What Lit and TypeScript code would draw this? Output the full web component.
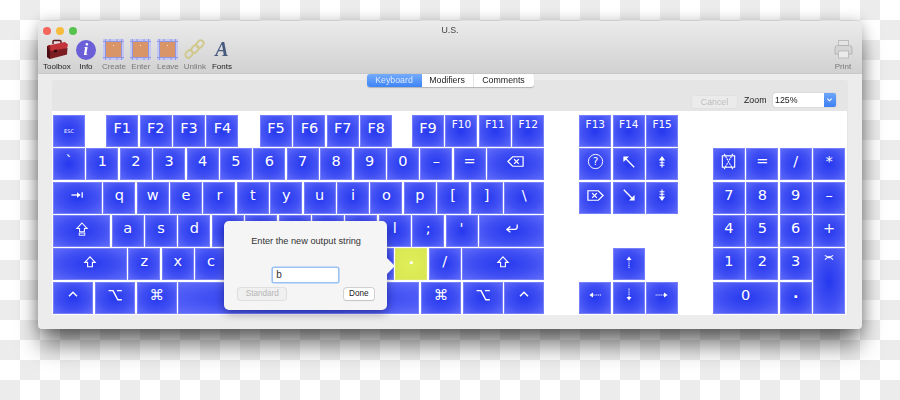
import { LitElement, html, css } from "lit";
import { customElement } from "lit/decorators.js";

const I: Record<string, unknown> = {
  tab: html`<svg class="kicon" viewBox="0 0 20 20"><path d="M3 10h10" stroke-width="1.6"/><path d="M10 6.5l4.5 3.5-4.5 3.5z" fill="#fff" stroke="none"/><path d="M16.5 6.5v7" stroke-width="1.6"/></svg>`,
  caps: html`<svg class="kicon" viewBox="0 0 20 20"><path d="M10 2.5l6.5 7h-3.5v4h-6v-4h-3.5z" stroke-width="1.3"/><rect x="6.5" y="15" width="7" height="2.8" stroke-width="1.1"/></svg>`,
  shift: html`<svg class="kicon" viewBox="0 0 20 20"><path d="M10 3.5l6.5 7h-3.5v5.5h-6v-5.5h-3.5z" stroke-width="1.4"/></svg>`,
  ret: html`<svg class="kicon" viewBox="0 0 20 20"><path d="M16.5 4.5v3q0 3-3 3h-9" stroke-width="1.6"/><path d="M8 6.8l-4.5 3.7 4.5 3.7" stroke-width="1.6"/></svg>`,
  del: html`<svg class="kicon big" viewBox="0 0 20 20"><path d="M2 10l5-5h11v10h-11z" stroke-width="1.3"/><path d="M8.5 7.5l5 5M13.5 7.5l-5 5" stroke-width="1.4"/></svg>`,
  fdel: html`<svg class="kicon big" viewBox="0 0 20 20"><path d="M18 10l-5-5h-11v10h11z" stroke-width="1.3"/><path d="M6.5 7.5l5 5M11.5 7.5l-5 5" stroke-width="1.4"/></svg>`,
  help: html`<svg class="kicon big" viewBox="0 0 20 20"><circle cx="10" cy="10" r="7.5" stroke-width="1"/><text x="10" y="14" class="q">?</text></svg>`,
  ul: html`<svg class="kicon" viewBox="0 0 20 20"><path d="M4.5 4.5l12 12" stroke-width="1.7"/><path d="M3 3h7l-7 7z" fill="#fff" stroke="none"/></svg>`,
  dr: html`<svg class="kicon" viewBox="0 0 20 20"><path d="M3.500 3.500l12 12" stroke-width="1.7"/><path d="M17 17h-7l7-7z" fill="#fff" stroke="none"/></svg>`,
  pgup: html`<svg class="kicon" viewBox="0 0 20 20"><path d="M10 4v13" stroke-width="1.4"/><path d="M6 8l4-5.500 4 5.500z" fill="#fff" stroke="none"/><path d="M7 11h6M7 14h6" stroke-width="1.3"/></svg>`,
  pgdn: html`<svg class="kicon" viewBox="0 0 20 20"><path d="M10 3v13" stroke-width="1.4"/><path d="M6 12l4 5.500 4-5.500z" fill="#fff" stroke="none"/><path d="M7 6h6M7 9h6" stroke-width="1.3"/></svg>`,
  up: html`<svg class="kicon" viewBox="0 0 20 20"><path d="M10 7v11" stroke-width="1.3" stroke-dasharray="1.4 .9"/><path d="M6.800 7.500l3.200-4.500 3.200 4.500z" fill="#fff" stroke="none"/></svg>`,
  down: html`<svg class="kicon" viewBox="0 0 20 20"><path d="M10 2v11" stroke-width="1.3" stroke-dasharray="1.4 .9"/><path d="M6.800 12.500l3.200 4.500 3.200-4.500z" fill="#fff" stroke="none"/></svg>`,
  left: html`<svg class="kicon" viewBox="0 0 20 20"><path d="M7 10h11" stroke-width="1.3" stroke-dasharray="1.4 .9"/><path d="M7.500 6.800l-4.500 3.200 4.500 3.200z" fill="#fff" stroke="none"/></svg>`,
  right: html`<svg class="kicon" viewBox="0 0 20 20"><path d="M2 10h11" stroke-width="1.3" stroke-dasharray="1.4 .9"/><path d="M12.500 6.800l4.500 3.200-4.500 3.200z" fill="#fff" stroke="none"/></svg>`,
  clear: html`<svg class="kicon big" viewBox="0 0 20 20"><rect x="3.500" y="4" width="13" height="12" stroke-width="1.200"/><path d="M5.500 2l9 16M14.500 2l-9 16" stroke-width="1.200" stroke-dasharray="2 .8"/></svg>`,
  ctrl: html`<svg class="kicon" viewBox="0 0 20 20"><path d="M5 11.500l5-5 5 5" stroke-width="1.800"/></svg>`,
  opt: html`<svg class="kicon" viewBox="0 0 20 20"><path d="M2 4.500h5.500l6 11.500h5M12.500 4.500h6" stroke-width="1.800"/></svg>`,
  ent: html`<svg class="kicon ent" viewBox="0 0 20 20"><path d="M3 4l7 4 7-4" stroke-width="1.700"/><path d="M3 11l7-5.500 7 5.500" stroke-width="1.700"/></svg>`,
};

type K = { l?: unknown; w?: number; s?: number; c?: string };
const k = (l: unknown, w = 32, c = ""): K => ({ l, w, c });
const sp = (s: number): K => ({ s });
const keys = (t: string) => t.split(" ").map((x) => k(x === "_" ? "" : x));

const MAIN: K[][] = [
  [k("ESC", 32, "xs"), sp(18.5), ...keys("F1 F2 F3 F4"), sp(18.8), ...keys("F5 F6 F7 F8"), sp(17.1), k("F9"),
    k("F10", 32, "sm"), k("F11", 32, "sm"), k("F12", 32, "sm")],
  [...keys("` 1 2 3 4 5 6 7 8 9 0 – ="), k(I.del, 57.2)],
  [k(I.tab, 48.9), ...keys("q w e r t y u i o p [ ]"), k("\\", 40.4)],
  [k(I.caps, 57.3), ...keys("a s d _ _ _ _ _ l ; '"), k(I.ret, 65.3)],
  [k(I.shift, 73.9), ...keys("z x c _ _ _ _ _"), k(".", 32, "hl dot"), k("/"), k(I.shift, 82.1)],
  [k(I.ctrl, 40.4), k(I.opt, 40.4), k("⌘", 40.4), k("", 241), k("⌘", 40.4), k(I.opt, 40.4), k(I.ctrl, 40)],
];

const NAV: (K | null)[] = [
  k("F13", 32, "sm"), k("F14", 32, "sm"), k("F15", 32, "sm"),
  k(I.help), k(I.ul), k(I.pgup),
  k(I.fdel), k(I.dr), k(I.pgdn),
  null, null, null,
  null, k(I.up), null,
  k(I.left), k(I.down), k(I.right),
];

const PAD: K[] = [
  k(I.clear), k("="), k("/"), k("*"),
  k("7"), k("8"), k("9"), k("–"),
  k("4"), k("5"), k("6"), k("+"),
  k("1"), k("2"), k("3"), k(I.ent, 32, "tall"),
  k("0", 32, "wide"), k(".", 32, "dot"),
];

const renderKey = (x: K) =>
  html`<div class="key ${x.c ?? ""}"><span class="lb">${x.l}</span></div>`;

const layerIcon = (mark: unknown) => html`<svg class="tool-icon" viewBox="0 0 21 21">
  <rect x="0" y="0" width="21" height="21" fill="#c4c8f0"/>
  <path d="M0 2.500h21M0 18.500h21M2.500 0v21M18.500 0v21M7 0v3M14 0v3M7 18v3M14 18v3" stroke="#8f96e6" stroke-width="1" fill="none"/>
  <rect x="3" y="3" width="15" height="15" fill="#d99468"/>
  <rect x="10" y="6" width="1" height="1" fill="#f4e2d4"/>
  ${mark}
</svg>`;

const TOOLS = [
  { n: "Toolbox", c: "t0", i: html`<svg class="tool-icon wide" viewBox="0 0 24 21">
      <path d="M8 5V2.500q0-1 1-1h6q1 0 1 1V5" fill="none" stroke="#5a1518" stroke-width="1.400"/>
      <path d="M3 6.500L20 3l3 2.500-1 4L5 13z" fill="#c2333a"/>
      <path d="M2 7l3-1 .5 6 17-3-.5 6.500L5 20 2 18z" fill="#7b1c22"/>
      <path d="M2 7l3 5v8l-3-2z" fill="#4a0f14"/>
      <path d="M9 11l3-.5v2.500l-3 .5z" fill="#2c0a0c"/>
    </svg>` },
  { n: "Info", c: "t1", i: html`<div class="info"><span>i</span></div>` },
  { n: "Create", c: "dis", i: layerIcon(html`<path d="M6.500 10v10M1.500 15h10" stroke="#dfe27a" stroke-width="1.500" fill="none"/>`) },
  { n: "Enter", c: "dis", i: layerIcon(html`<path d="M1 14.500h10M7.500 11l3.500 3.500-3.500 3.500" stroke="#dfe27a" stroke-width="1.500" fill="none"/>`) },
  { n: "Leave", c: "dis", i: layerIcon(html`<path d="M9 14.500h10M15.500 11l3.500 3.500-3.500 3.500" stroke="#d8c060" stroke-width="1.400" fill="none"/>`) },
  { n: "Unlink", c: "dis", i: html`<svg class="tool-icon" viewBox="0 0 21 21" fill="none" stroke="#cfc88a" stroke-width="1.800">
      <rect x="13" y="1" width="6" height="8" rx="3" transform="rotate(40 16 5)"/>
      <rect x="8" y="6" width="6" height="8" rx="3" transform="rotate(40 11 10)"/>
      <rect x="2" y="11" width="6" height="8" rx="3" transform="rotate(40 5 15)"/>
    </svg>` },
  { n: "Fonts", c: "", i: html`<div class="fonta">A</div>` },
];

@customElement("app-root")
export class AppRoot extends LitElement {
  static styles = css`
    :host {
      display: block;
      width: 900px;
      height: 400px;
      box-sizing: border-box;
      padding: 21px 38px 0;
      overflow: hidden;
      background: repeating-conic-gradient(#ececec 0 25%, #fff 0 50%) 0 0 / 40px 40px;
      font-family: "Liberation Sans", Arial, sans-serif;
      color: #222;
    }
    .window {
      width: 824px;
      height: 308px;
      border-radius: 4px;
      background: #ececec;
      box-shadow: 0 18px 24px -3px rgba(0, 0, 0, 0.58), 0 0 14px rgba(0, 0, 0, 0.24);
      display: flex;
      flex-direction: column;
      filter: blur(0.3px);
    }
    .chrome {
      height: 53px;
      box-sizing: border-box;
      border-radius: 4px 4px 0 0;
      background: linear-gradient(#ebebeb, #d1d1d1);
      border-bottom: 1px solid #c8c8c8;
      display: flex;
      flex-direction: column;
    }
    .titlebar {
      height: 17px;
      flex: none;
      display: grid;
      grid-template-columns: 1fr auto 1fr;
      align-items: center;
      padding: 1px 5px 0;
    }
    .lights { display: flex; gap: 5px; }
    .lights i { width: 8px; height: 8px; border-radius: 50%; display: block; }
    .lights .r { background: #f4665c; }
    .lights .y { background: #f7bb3e; }
    .lights .g { background: #58c24e; }
    .title { font-size: 8.800px; color: #444; margin-top: -1px; }
    .tools { display: flex; align-items: flex-start; padding: 0 5.500px 0 5.400px; flex: 1; }
    .tool {
      width: 27px;
      display: flex;
      flex-direction: column;
      align-items: center;
      font-size: 8px;
      line-height: 9px;
      color: #222;
      white-space: nowrap;
    }
    .tool .ic { height: 21px; display: flex; align-items: center; justify-content: center; margin-bottom: 1.500px; }
    .tool-icon { width: 21px; height: 21px; display: block; }
    .tool-icon.wide { width: 24px; }
    .t0 { margin-right: 2px; }
    .t1 { margin-right: 1px; }
    .dis { color: #777; }
    .info {
      width: 20px; height: 20px; border-radius: 50%;
      background: #6a5fd6;
      color: #fff;
      display: flex; align-items: center; justify-content: center;
      font: italic bold 17px "Liberation Serif", serif;
    }
    .fonta { font: italic bold 20px "Liberation Serif", serif; color: #47597f; line-height: 21px; }
    .print { margin-left: auto; color: #777; }
    .print svg { opacity: 0.8; }
    .body { flex: 1; padding: 0 14px; display: flex; flex-direction: column; min-height: 0; }
    .tabs {
      align-self: center;
      display: flex;
      position: relative;
      z-index: 1;
      height: 13px;
      border-radius: 3px;
      background: #fff;
      box-shadow: 0 1px 1px rgba(0, 0, 0, 0.22);
      font-size: 8.800px;
      line-height: 13px;
      color: #222;
    }
    .tabs div { text-align: center; border-right: 1px solid #e4e4e4; box-sizing: border-box; }
    .tabs .t-k { width: 55px; background: linear-gradient(#74abfa, #3e84f6); color: #dbe8fc; border-radius: 3px 0 0 3px; border-right: 0; }
    .tabs .t-m { width: 52px; }
    .tabs .t-c { width: 60px; border-right: 0; }
    .panel {
      margin-top: -7px;
      height: 235px;
      background: #e5e5e5;
      border-radius: 3px 3px 0 0;
      display: flex;
      flex-direction: column;
    }
    .zoomrow {
      height: 31px;
      flex: none;
      box-sizing: border-box;
      padding: 13px 12.500px 0 0;
      display: flex;
      justify-content: flex-end;
      align-items: flex-start;
      font-size: 8.800px;
    }
    .cancel {
      width: 45px; height: 12px; margin-top: 3px; margin-right: 7px;
      background: #ebebeb; border-radius: 2px; color: #bcbcbc;
      text-align: center; line-height: 12px; box-shadow: 0 0 0 .5px #dedede;
    }
    .zlabel { margin-right: 6px; line-height: 14px; color: #222; }
    .select {
      width: 63px; height: 13.500px; background: #fff; display: flex; border-radius: 2px;
      box-shadow: 0 0 1px rgba(0, 0, 0, 0.4); line-height: 14px; position: relative;
    }
    .select span { flex: 1; padding-left: 2.500px; }
    .select i {
      width: 12px; background: linear-gradient(#6ea6f9, #3d80f4); border-radius: 0 2px 2px 0;
      display: flex; align-items: center; justify-content: center;
    }
    .select svg { width: 7px; height: 7px; }
    .board {
      position: relative;
      flex: 1;
      background: #fff;
      margin-right: 1px;
      padding: 4px 0 0 1px;
      box-sizing: border-box;
      display: flex;
    }
    .main { width: 491.500px; display: flex; flex-direction: column; gap: 1.350px; flex: none; }
    .row { display: flex; gap: 1.400px; }
    .nav { margin-left: 34.800px; display: grid; grid-template-columns: repeat(3, 32px); grid-auto-rows: 32px; gap: 1.350px 1.400px; align-self: flex-start; }
    .pad { margin-left: 34.800px; margin-top: 33.350px; display: grid; grid-template-columns: repeat(4, 32px); grid-auto-rows: 32px; gap: 1.350px 1.400px; align-self: flex-start; }
    .key {
      height: 32px;
      flex: none;
      box-sizing: border-box;
      background: radial-gradient(ellipse at center, #2638ef 0%, #4150f3 55%, #636efa 100%);
      box-shadow: inset 0 0 0 1px #7680fa;
      color: #fff;
      display: flex;
      align-items: center;
      justify-content: center;
      padding-bottom: 5px;
      font: 14.500px "DejaVu Sans", sans-serif;
      line-height: 15px;
    }
    .lb { display: flex; align-items: center; justify-content: center; }
    .key.sm { font-size: 10.500px; padding-bottom: 14px; }
    .key.xs { font-size: 5px; padding-bottom: 0; }
    .key.dot { padding-bottom: 9px; font-weight: bold; }
    .key.hl { background: radial-gradient(circle, #dfee5c, #d8e64e); box-shadow: inset 0 0 0 1px #dfe96a; }
    .key.wide { grid-column: span 2; }
    .key.tall { grid-row: span 2; height: auto; align-items: flex-start; padding: 5px 0 0; }
    .kicon { width: 16px; height: 16px; fill: none; stroke: #fff; display: block; }
    .kicon.big { width: 19px; height: 19px; }
    .kicon.ent { width: 12px; height: 12px; }
    .q { font: 11px "DejaVu Sans", sans-serif; fill: #fff; stroke: none; text-anchor: middle; }
    .dialog {
      position: absolute;
      left: 172.300px;
      top: 110px;
      width: 162.500px;
      height: 88.500px;
      box-sizing: border-box;
      background: #f5f5f5;
      border-radius: 5px;
      box-shadow: 0 3px 10px rgba(0, 0, 30, 0.4);
      display: flex;
      flex-direction: column;
      align-items: center;
      padding: 14px 13px 0 14px;
      font-size: 9.200px;
      color: #333;
    }
    .dialog::after {
      content: "";
      position: absolute;
      right: -5px;
      top: 37.500px;
      width: 14px;
      height: 14px;
      background: #f5f5f5;
      transform: rotate(45deg);
    }
    .dialog > * { position: relative; z-index: 1; }
    .msg { line-height: 12px; }
    .field {
      margin-top: 20.500px;
      margin-left: -1px;
      width: 64.500px;
      height: 14px;
      box-sizing: border-box;
      background: #fff;
      box-shadow: 0 0 0 1.600px #9cc2f3;
      padding-left: 3px;
      line-height: 14px;
      font-size: 10px;
      color: #333;
      border-radius: 1px;
    }
    .btns { align-self: stretch; display: flex; justify-content: space-between; margin-top: 6.500px; }
    .btn {
      height: 11.500px; line-height: 11px; text-align: center; border-radius: 2.500px; font-size: 8.200px; box-sizing: border-box;
    }
    .btn.std { width: 48px; color: #b5b5b5; background: #f0f0f0; box-shadow: 0 0 0 .8px #d8d8d8; }
    .btn.done { width: 30px; color: #222; background: #fff; box-shadow: 0 0 0 .7px #c4c4c4, 0 1px 1px rgba(0, 0, 0, .18); }
  `;

  render() {
    return html`
      <div class="window">
        <div class="chrome">
          <div class="titlebar">
            <div class="lights"><i class="r"></i><i class="y"></i><i class="g"></i></div>
            <div class="title">U.S.</div>
            <div></div>
          </div>
          <div class="tools">
            ${TOOLS.map((t) => html`<div class="tool ${t.c}"><div class="ic">${t.i}</div>${t.n}</div>`)}
            <div class="tool print">
              <div class="ic">
                <svg class="tool-icon" viewBox="0 0 21 21" fill="none">
                  <rect x="5.500" y="1.500" width="10" height="6" fill="#e6e6e6" stroke="#b4b4b4"/>
                  <path d="M2 9q0-2.500 2.500-2.500h12q2.500 0 2.500 2.500v6h-17z" fill="#d4d4d4" stroke="#ababab"/>
                  <rect x="5.500" y="12" width="10" height="7" fill="#efefef" stroke="#b4b4b4"/>
                </svg>
              </div>
              Print
            </div>
          </div>
        </div>
        <div class="body">
          <div class="tabs">
            <div class="t-k">Keyboard</div>
            <div class="t-m">Modifiers</div>
            <div class="t-c">Comments</div>
          </div>
          <div class="panel">
            <div class="zoomrow">
              <div class="cancel">Cancel</div>
              <div class="zlabel">Zoom</div>
              <div class="select">
                <span>125%</span>
                <i><svg viewBox="0 0 8 8"><path d="M1.500 3l2.500 2.500 2.500-2.500" stroke="#fff" stroke-width="1.300" fill="none"/></svg></i>
              </div>
            </div>
            <div class="board">
              <div class="main">
                ${MAIN.map(
                  (r) => html`<div class="row">
                    ${r.map((x) =>
                      x.s !== undefined
                        ? html`<div style="width:${x.s}px;flex:none"></div>`
                        : html`<div class="key ${x.c ?? ""}" style="width:${x.w}px"><span class="lb">${x.l}</span></div>`
                    )}
                  </div>`
                )}
              </div>
              <div class="nav">
                ${NAV.map((x) => (x ? renderKey(x) : html`<div></div>`))}
              </div>
              <div class="pad">${PAD.map(renderKey)}</div>
              <div class="dialog">
                <div class="msg">Enter the new output string</div>
                <div class="field">b</div>
                <div class="btns">
                  <div class="btn std">Standard</div>
                  <div class="btn done">Done</div>
                </div>
              </div>
            </div>
          </div>
        </div>
      </div>
    `;
  }
}
